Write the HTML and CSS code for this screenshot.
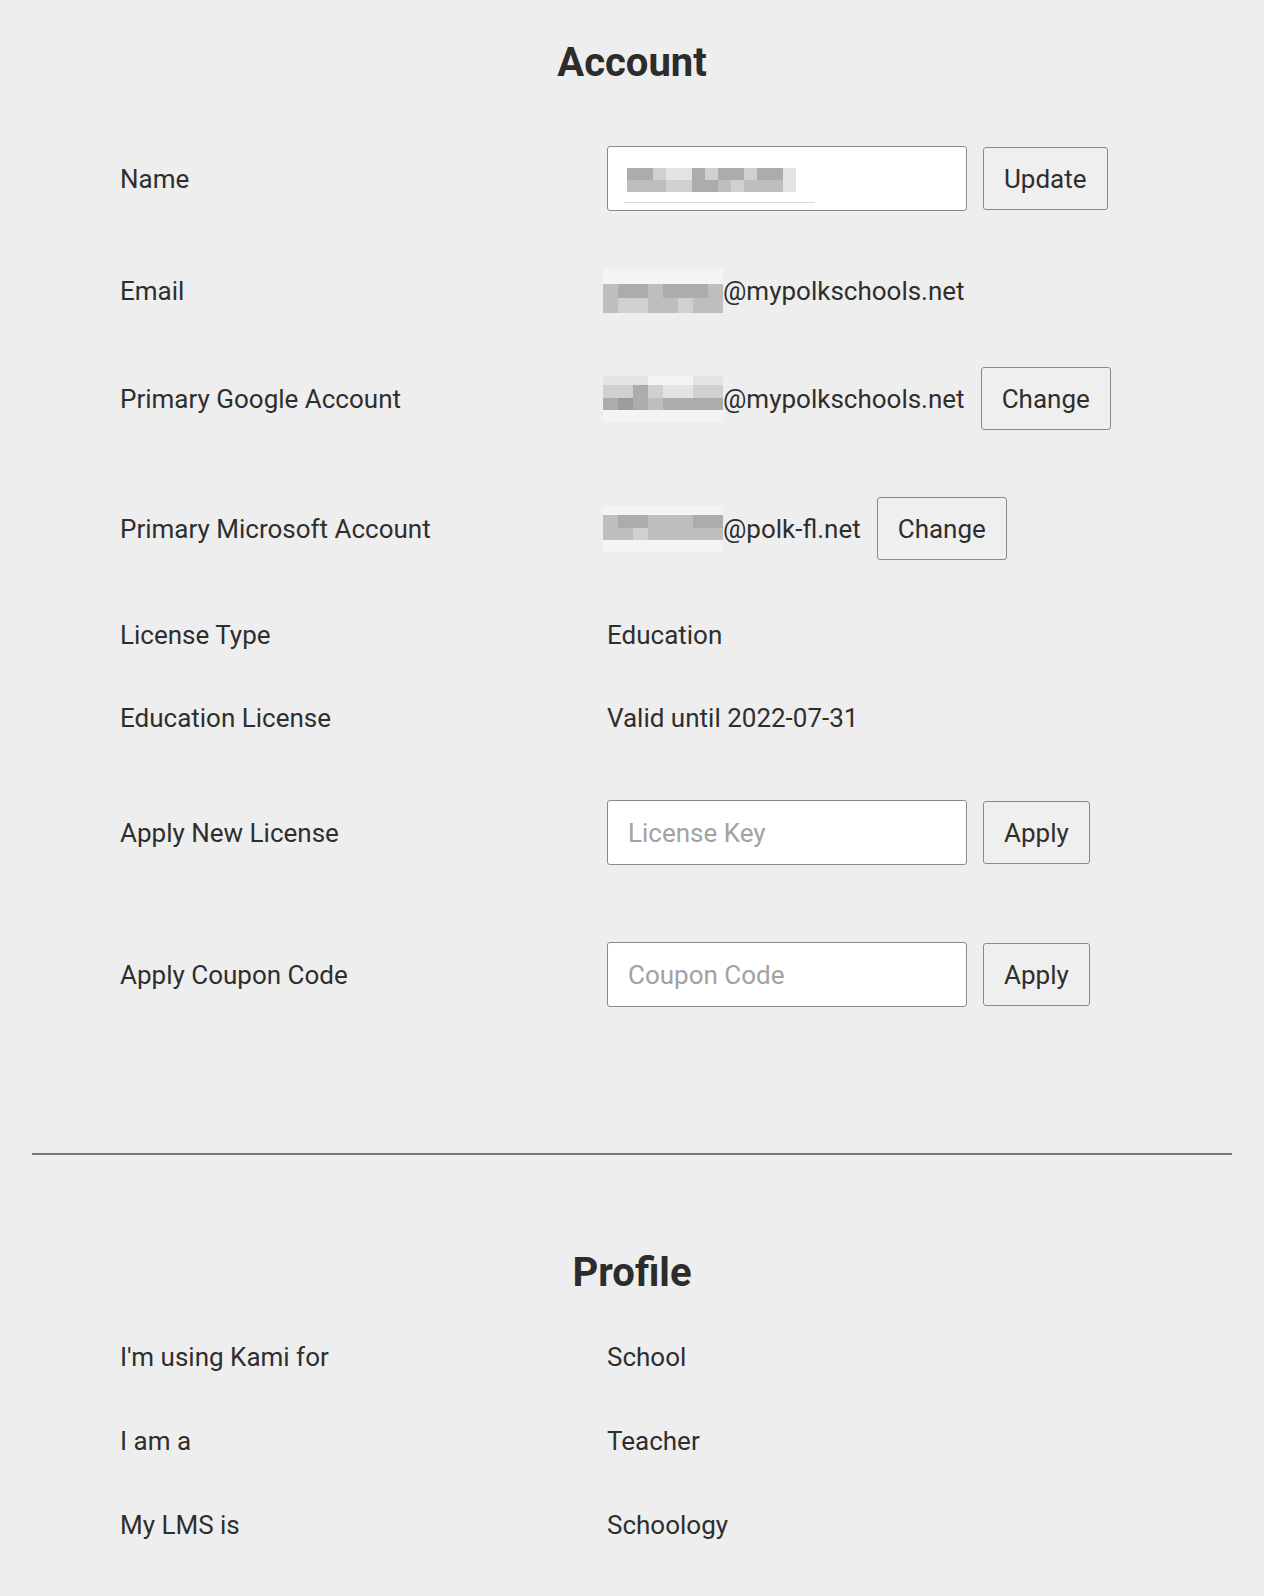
FILE: index.html
```html
<!DOCTYPE html>
<html lang="en">
<head>
<meta charset="utf-8">
<title>Account</title>
<link rel="stylesheet" href="styles.css">
</head>
<body>
<main class="page">
  <section class="section">
    <h1 class="title">Account</h1>
    <div class="rows">
      <div class="row row--first">
        <div class="label">Name</div>
        <div class="value">
          <div class="field field--name">
            <div class="pix pix--name">
              <span class="s4"></span><span class="s4"></span><span class="s2"></span><span class="s1"></span><span class="s1"></span><span class="s4"></span><span class="s2"></span><span class="s4"></span><span class="s4"></span><span class="s2"></span><span class="s4"></span><span class="s4"></span><span class="s1"></span>
              <span class="s3"></span><span class="s3"></span><span class="s3"></span><span class="s2"></span><span class="s2"></span><span class="s4"></span><span class="s4"></span><span class="s3"></span><span class="s2"></span><span class="s3"></span><span class="s3"></span><span class="s3"></span><span class="s1"></span>
            </div>
            <div class="spell-line"></div>
          </div>
          <button class="btn" type="button">Update</button>
        </div>
      </div>

      <div class="row row--email">
        <div class="label">Email</div>
        <div class="value value--tight">
          <div class="pix pix--mail">
            <span class="s0"></span><span class="s0"></span><span class="s0"></span><span class="s0"></span><span class="s0"></span><span class="s0"></span><span class="s0"></span><span class="s0"></span>
            <span class="s3"></span><span class="s4"></span><span class="s4"></span><span class="s3"></span><span class="s4"></span><span class="s4"></span><span class="s4"></span><span class="s3"></span>
            <span class="s3"></span><span class="s2"></span><span class="s2"></span><span class="s3"></span><span class="s3"></span><span class="s2"></span><span class="s3"></span><span class="s3"></span>
          </div>
          <span class="text">@mypolkschools.net</span>
        </div>
      </div>

      <div class="row row--google">
        <div class="label">Primary Google Account</div>
        <div class="value">
          <div class="mail">
            <div class="pix pix--mail pix--four">
              <span class="s1"></span><span class="s1"></span><span class="s1"></span><span class="s0"></span><span class="s0"></span><span class="s0"></span><span class="s1"></span><span class="s1"></span>
              <span class="s2"></span><span class="s2"></span><span class="s4"></span><span class="s2"></span><span class="s1"></span><span class="s1"></span><span class="s2"></span><span class="s2"></span>
              <span class="s4"></span><span class="s5"></span><span class="s4"></span><span class="s3"></span><span class="s4"></span><span class="s4"></span><span class="s4"></span><span class="s4"></span>
              <span class="s0"></span><span class="s0"></span><span class="s0"></span><span class="s0"></span><span class="s0"></span><span class="s0"></span><span class="s0"></span><span class="s0"></span>
            </div>
            <span class="text">@mypolkschools.net</span>
          </div>
          <button class="btn" type="button">Change</button>
        </div>
      </div>

      <div class="row row--microsoft">
        <div class="label">Primary Microsoft Account</div>
        <div class="value">
          <div class="mail">
            <div class="pix pix--mail pix--four">
              <span class="s0"></span><span class="s0"></span><span class="s0"></span><span class="s0"></span><span class="s0"></span><span class="s0"></span><span class="s0"></span><span class="s0"></span>
              <span class="s3"></span><span class="s4"></span><span class="s4"></span><span class="s3"></span><span class="s3"></span><span class="s3"></span><span class="s4"></span><span class="s4"></span>
              <span class="s3"></span><span class="s3"></span><span class="s2"></span><span class="s3"></span><span class="s3"></span><span class="s3"></span><span class="s3"></span><span class="s3"></span>
              <span class="s0"></span><span class="s0"></span><span class="s0"></span><span class="s0"></span><span class="s0"></span><span class="s0"></span><span class="s0"></span><span class="s0"></span>
            </div>
            <span class="text">@polk-fl.net</span>
          </div>
          <button class="btn" type="button">Change</button>
        </div>
      </div>

      <div class="row row--license-type">
        <div class="label">License Type</div>
        <div class="value"><span class="text">Education</span></div>
      </div>

      <div class="row row--edu">
        <div class="label">Education License</div>
        <div class="value"><span class="text">Valid until 2022-07-31</span></div>
      </div>

      <div class="row row--apply">
        <div class="label">Apply New License</div>
        <div class="value">
          <input class="field" type="text" placeholder="License Key">
          <button class="btn" type="button">Apply</button>
        </div>
      </div>

      <div class="row row--coupon">
        <div class="label">Apply Coupon Code</div>
        <div class="value">
          <input class="field" type="text" placeholder="Coupon Code">
          <button class="btn" type="button">Apply</button>
        </div>
      </div>
    </div>
  </section>

  <hr class="divider">

  <section class="section section--profile">
    <h2 class="title">Profile</h2>
    <div class="rows">
      <div class="row row--p1">
        <div class="label">I'm using Kami for</div>
        <div class="value"><span class="text">School</span></div>
      </div>
      <div class="row row--p">
        <div class="label">I am a</div>
        <div class="value"><span class="text">Teacher</span></div>
      </div>
      <div class="row row--p">
        <div class="label">My LMS is</div>
        <div class="value"><span class="text">Schoology</span></div>
      </div>
    </div>
  </section>
</main>
</body>
</html>
```

FILE: styles.css
```css
* { box-sizing: border-box; }

html, body {
  margin: 0;
  padding: 0;
  background: #eeeeee;
}

body {
  font-family: Roboto, "Noto Sans", Arial, sans-serif;
  color: #2e2e2e;
  font-size: 26px;
  line-height: 36px;
}

.page {
  padding: 0 32px 54px;
}

.title {
  margin: 0;
  padding-top: 39px;
  font-size: 40px;
  line-height: 48px;
  font-weight: 700;
  text-align: center;
  color: #2c2c2c;
}

.section--profile .title {
  padding-top: 94px;
}

.rows {
  display: flex;
  flex-direction: column;
}

.row {
  display: grid;
  grid-template-columns: 487px 1fr;
  align-items: center;
  padding-left: 88px;
  margin-top: 48px;
}

.row--first { margin-top: 59px; }
.row--email { margin-top: 58px; }
.row--google { margin-top: 54px; }
.row--microsoft { margin-top: 67px; }
.row--license-type { margin-top: 57px; }
.row--edu { margin-top: 47px; }
.row--apply { margin-top: 64px; }
.row--coupon { margin-top: 77px; }
.row--p1 { margin-top: 42px; }
.row--p { margin-top: 48px; }

.label {
  white-space: nowrap;
}

.value {
  display: flex;
  align-items: center;
  gap: 16px;
  white-space: nowrap;
}

.value--tight,
.mail {
  display: flex;
  align-items: center;
  gap: 0;
  margin-left: -4px;
}

.text {
  display: inline-block;
}

.field {
  width: 360px;
  height: 65px;
  border: 1px solid #8a8a8a;
  border-radius: 3px;
  background: #ffffff;
  padding: 0 20px;
  font-family: inherit;
  font-size: 26px;
  color: #2e2e2e;
  outline: none;
}

.field::placeholder {
  color: #a2a2a2;
}

.field--name {
  display: flex;
  flex-direction: column;
  justify-content: flex-start;
  padding: 21px 0 0 16px;
  gap: 10px;
}

.spell-line {
  width: 191px;
  height: 1px;
  background: #d8d8d8;
}

.btn {
  height: 63px;
  padding: 0 20px;
  border: 1px solid #8a8a8a;
  border-radius: 3px;
  background: #efefef;
  font-family: inherit;
  font-size: 26px;
  color: #2e2e2e;
  cursor: pointer;
}

.pix {
  display: grid;
  flex: none;
}

.pix span { display: block; }

.pix--name {
  grid-template-columns: repeat(13, 13px);
  grid-template-rows: 12px 12px;
  margin-left: 3px;
}

.pix--mail {
  grid-template-columns: repeat(8, 15px);
  grid-template-rows: 15px 14px 15px;
}

.pix--four {
  grid-template-rows: 9px 13px 12px 12px;
  margin-top: 0;
}

.s0 { background: #f4f4f4; }
.s1 { background: #e3e3e3; }
.s2 { background: #d0d0d0; }
.s3 { background: #bebebe; }
.s4 { background: #acacac; }
.s5 { background: #9c9c9c; }

.divider {
  margin: 146px 0 0;
  border: 0;
  height: 2px;
  background: #767676;
}
```
